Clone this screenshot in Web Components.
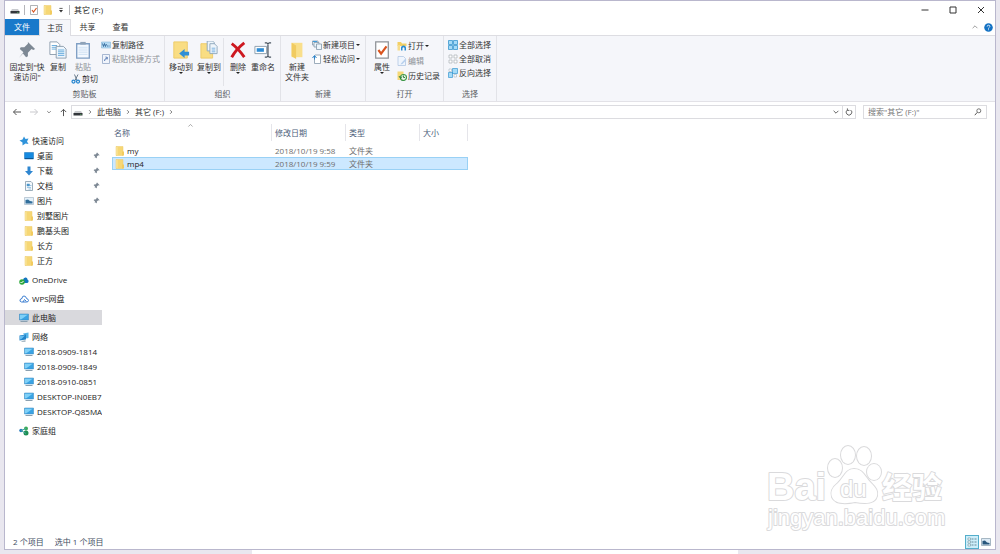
<!DOCTYPE html>
<html lang="zh-CN">
<head>
<meta charset="utf-8">
<title>其它 (F:)</title>
<style>
  html, body { margin: 0; height: 100%; }
  body {
    background: #e9e7ef;
    font: 8px/10px "Open Sans", "Noto Sans CJK SC", sans-serif;
    color: #222;
  }
</style>
</head>
<body>
<explorer-window></explorer-window>

<script>
const folder = '<path d="M2 1h14v18H2z" fill="#f6d775"/><path d="M2 1h3v18H2z" fill="#fae7a0"/><path d="M14 11h4v8h-4z" fill="#f3cc5c"/><path d="M2 1h14v18H2z" fill="none" stroke="#ecca68"/>';
const monitor = '<path d="M1 2h18v12H1z" fill="#3aa3e3"/><path d="M2 3h16L4 13H2z" fill="#7fd0f7"/><path d="M1 2h18v12H1z" fill="none" stroke="#3487bd"/><path d="M3 17h14" stroke="#8ba0b0" stroke-width="2"/>';
const ICONS = {
  drive: '<path d="M4 8h12l3 5H1z" fill="#c9cbce"/><path d="M1 12h18v5H1z" fill="#33363b"/><path d="M14 14h3v1h-3z" fill="#5fd36b"/>',
  checkdoc: '<path d="M3 1h14v18H3z" fill="#fff" stroke="#8f9398" stroke-width="1.4"/><path d="M6 10l3 4 6-8" fill="none" stroke="#d9541e" stroke-width="2.4"/>',
  folder,
  quickmenu: '<path d="M6 6h8" stroke="#333" stroke-width="2"/><path d="M5 10h10l-5 6z" fill="#333"/>',
  minimize: '<path d="M3 10h14" stroke="#333" stroke-width="2"/>',
  maximize: '<path d="M4 4h12v12H4z" fill="none" stroke="#333" stroke-width="2"/>',
  close: '<path d="M4 4l12 12M16 4L4 16" stroke="#333" stroke-width="2"/>',
  up2: '<path d="M4 13l6-6 6 6" fill="none" stroke="#888" stroke-width="2"/>',
  help: '<circle cx="10" cy="10" r="9.500" fill="#1472c4"/><path d="M7 8q0-3 3-3t3 2.500q0 1.500-1.500 2.500T10 12.500M10 14v2" fill="none" stroke="#fff" stroke-width="1.800"/>',
  pin: '<path d="M11 1l8 8-2 1-2-1-4 4v4l-2 1-3.500-4L1 19l5-6.500L2 9l1-2h4l4-4z" fill="#7d8894"/>',
  copy: '<g stroke="#8a9baa" fill="#fff"><path d="M1 1h8l3 3v11H1z"/><path d="M3 5h6M3 7h6M3 9h5" stroke="#5fa7da"/><path d="M8 6h8l3 3v10H8z" fill="#eef6fd"/><path d="M10 10h7M10 12h7M10 14h7M10 16h7" stroke="#5fa7da"/></g>',
  paste: '<path d="M3 3h14v16H3z" fill="#f4f9ff" stroke="#7f9fc4" stroke-width="1.500"/><path d="M7 1h6v3H7z" fill="#8fa3b8"/><path d="M5 7h10M5 9h10M5 11h10M5 13h10M5 15h10" stroke="#cfe1f4"/>',
  scissors: '<path d="M7 1l5 12M14 1L8 13" stroke="#6b7c8c" stroke-width="2"/><circle cx="5" cy="15" r="3" fill="none" stroke="#2585cf" stroke-width="2.500"/><circle cx="14" cy="15" r="3" fill="none" stroke="#2585cf" stroke-width="2.500"/>',
  path: '<path d="M1 4h18v12H1z" fill="#b7dbf3" stroke="#75abd1"/><path d="M3 7l2 6 2-6 2 6 2-5M12 12h2M15 12h2" fill="none" stroke="#19538b" stroke-width="1.500"/>',
  shortcut: '<path d="M3 1h14v18H3z" fill="#f1f5fc" stroke="#8fa3c4" stroke-width="1.500"/><path d="M7 14q0-5 5-6M9 6l4 1-1 4" fill="none" stroke="#5b7db5" stroke-width="2"/>',
  moveto: '<path d="M2 1h15v18H2z" fill="#f9dd83" stroke="#ecc968"/><path d="M8 14l6-5v3h5v4h-5v3z" fill="#2f8fd6"/>',
  copyto: '<path d="M1 3h13v16H1z" fill="#f9dd83" stroke="#ecc968"/><g fill="#eef5fb" stroke="#8ba5ba"><path d="M8 0h6l2 2v9H8z"/><path d="M11 3h5l3 3v8h-8z"/><path d="M13 8h4M13 10h4M13 12h4" stroke="#73aee0"/></g>',
  delete: '<path d="M3 3q7 5 14 15M17 2Q8 9 3 18" fill="none" stroke="#cd1820" stroke-width="3.200"/>',
  rename: '<path d="M1 6h13v8H1z" fill="#fff" stroke="#879aaa"/><path d="M3 8h8v4H3z" fill="#2d8cd6"/><path d="M12 2h2l1.500 1L17 2h2M15.500 3v14M12 18h2l1.500-1 1.500 1h2" fill="none" stroke="#4a5560" stroke-width="1.400"/>',
  newfolder: '<path d="M4 2h12v16H4z" fill="#f9df8b"/><path d="M4 2l5 3v15l-5-3z" fill="#f1cb60"/>',
  newitem: '<g fill="#edf5fb" stroke="#7d93a5" stroke-width="1.500"><path d="M1 2h11v8H1z"/><path d="M4 5h10v9H4z"/><path d="M9 8h10v11H9z"/></g><path d="M2 3h8" stroke="#3f9cdb" stroke-width="2"/>',
  easy: '<path d="M6 2h11v17H5v-9" fill="#fff" stroke="#7d93a5" stroke-width="1.500"/><path d="M1 8l4-5 4 5M5 4v7" fill="none" stroke="#2d83c7" stroke-width="2"/>',
  open: '<path d="M1 2h7l2 3h9v5H1z" fill="#f3cf65"/><path d="M1 8h5v11H1z" fill="#f6dc8b"/><path d="M8 19v-5q0-5 5-5t5 5v5h-3v-5q-2-3-4 0v5z" fill="#2a8bcf"/>',
  edit: '<path d="M2 1h11l4 4v14H2z" fill="#eff5fd" stroke="#adc4e2" stroke-width="1.500"/><path d="M8 15l8-9 3 2-8 8-4 1z" fill="#b8d1ee"/>',
  history: '<path d="M1 1h12v17H1z" fill="#f5d977"/><circle cx="13" cy="13" r="6" fill="#e9f4e6" stroke="#3d9747" stroke-width="2.200"/><path d="M13 9v4h3M4 10l3 5 3-4" fill="none" stroke="#277b37" stroke-width="1.800"/>',
  selall: '<path d="M1 1h8v8H1zM11 1h8v8h-8zM1 11h8v8H1zM11 11h8v8h-8z" fill="#a5dbf7" stroke="#2f92cc" stroke-width="1.500"/>',
  selnone: '<path d="M2 2h6v6H2zM12 2h6v6h-6zM2 12h6v6H2zM12 12h6v6h-6z" fill="#fff" stroke="#a5abb1" stroke-width="1.300"/>',
  selinv: '<path d="M9 1h10v10H9zM1 9h8v10H1z" fill="#a5dbf7" stroke="#2f92cc" stroke-width="1.300"/><path d="M2 2h5v5H2zM12 13h5v5h-5z" fill="#fff" stroke="#91a7b7"/>',
  back: '<path d="M18 10H3M9 4l-6 6 6 6" fill="none" stroke="#555" stroke-width="2"/>',
  forward: '<path d="M2 10h15M11 4l6 6-6 6" fill="none" stroke="#c9c9cd" stroke-width="2"/>',
  up: '<path d="M10 18V3M4 9l6-6 6 6" fill="none" stroke="#555" stroke-width="2.200"/>',
  down: '<path d="M4 7l6 6 6-6" fill="none" stroke="#666" stroke-width="2.500"/>',
  right: '<path d="M7 4l6 6-6 6" fill="none" stroke="#555" stroke-width="2.500"/>',
  refresh: '<path d="M14 5a7 7 0 1 1-8 0M6 1v5h5" fill="none" stroke="#555" stroke-width="2.200"/>',
  search: '<circle cx="12" cy="7" r="5" fill="none" stroke="#555" stroke-width="2"/><path d="M8 11l-6 7" stroke="#555" stroke-width="2.500"/>',
  star: '<path d="M10 1l3 5 6-1-3 6 3 5-6-1-6 4v-6L1 9l6-2z" fill="#2f93da"/>',
  desktop: '<path d="M1 3h18v13H1z" fill="#168ae0" stroke="#0f6cb6"/><path d="M2 15h16" stroke="#0c5593" stroke-width="2"/>',
  download: '<path d="M7 1h6v9h5l-8 9-8-9h5z" fill="#2e86d0"/>',
  document: '<path d="M3 1h11l3 3v15H3z" fill="#f4f8fb" stroke="#7e95a5" stroke-width="1.500"/><path d="M6 6h5v4H6zM6 13h8M9 16h5M12 9h3" fill="#4b97cb" stroke="#4b97cb"/>',
  picture: '<path d="M1 3h18v14H1z" fill="#e4f1fa" stroke="#8da1b0"/><path d="M3 13V8l5-1 4 3 5 1v4H3z" fill="#326f9b"/>',
  onedrive: '<path d="M3 14q0-5 5-4 1-6 6-5 3 1 3 4 3 1 2 5l-2 2H5z" fill="#1376bf"/><circle cx="6" cy="14" r="5.500" fill="#2fa83c"/><path d="M3 14l2 2 4-4" fill="none" stroke="#fff" stroke-width="2"/>',
  wps: '<path d="M5 16q-4-1-3-4 1-3 4-3 0-5 4-5t5 5q4 1 4 4t-4 3zM8 16l3-5 4 4" fill="none" stroke="#3d7fd1" stroke-width="2"/>',
  monitor,
  network: '<path d="M8 3l11-2v11l-4 1z" fill="#57b5e8"/><path d="M1 7l13-2v10L1 17z" fill="#2183c9"/><path d="M2 8l10-1-7 7-3 1z" fill="#65bdf0"/><path d="M5 18l8-1v2H5z" fill="#5b7b90"/>',
  homegroup: '<circle cx="4" cy="9" r="3.500" fill="#2579bd"/><circle cx="14" cy="5" r="4" fill="#3aaa5a"/><circle cx="14" cy="14" r="5" fill="#1d8f53"/><path d="M4 9l10-4M4 9l10 6" stroke="#48a6a0" stroke-width="2"/>',
  details: '<path d="M2 2h5v4H2zM2 8h5v4H2zM2 14h5v4H2z" fill="#fff" stroke="#58808f"/><path d="M9 4h4M15 4h4M9 10h4M15 10h4M9 16h4M15 16h4" stroke="#476b7b" stroke-width="1.500"/>',
  thumbs: '<path d="M1 3h18v14H1z" fill="#dceaf5" stroke="#8da1b0" stroke-width="1.500"/><path d="M3 8l5-1 4 4 5 1v3H3z" fill="#27567c"/>'
};

const define = (name, html) => customElements.define(name, class extends HTMLElement {
  constructor() {
    super();
    this.attachShadow({ mode: 'open' });
  }
  connectedCallback() {
    if (this.shadowRoot.childNodes.length) return;
    const t = document.createElement('template');
    t.innerHTML = typeof html === 'function' ? html(this) : html;
    this.shadowRoot.append(t.content.cloneNode(true));
  }
});

const BUTTON = 'button{font:inherit;color:inherit;background:none;border:0;padding:0;margin:0;display:flex;align-items:center;justify-content:center;white-space:nowrap}';

define('ui-icon', el => `
  <style>
    :host { display: block; flex: none; width: ${el.getAttribute('size') || 10}px; height: ${el.getAttribute('size') || 10}px; }
    svg { display: block; width: 100%; height: 100%; }
  </style>
  <svg viewBox="0 0 20 20" aria-hidden="true">${ICONS[el.getAttribute('name')]}</svg>`);

define('title-bar', `
  <style>
    ${BUTTON}
    :host { display: flex; align-items: center; height: 18px; padding-left: 5px; background: #fff; }
    .quick { display: flex; align-items: center; gap: 4px; margin-right: 4px; }
    .rule { width: 1px; height: 10px; background: #b5b5b9; }
    h1 { margin: 0; font: inherit; flex: 1; }
    .controls { display: flex; }
    .controls button { width: 28px; height: 18px; }
  </style>
  <div class="quick">
    <ui-icon name="drive"></ui-icon>
    <span class="rule"></span>
    <button aria-label="属性"><ui-icon name="checkdoc"></ui-icon></button>
    <button aria-label="新建文件夹"><ui-icon name="folder"></ui-icon></button>
    <button aria-label="自定义"><ui-icon name="quickmenu" size="8"></ui-icon></button>
    <span class="rule"></span>
  </div>
  <h1>其它 (F:)</h1>
  <div class="controls">
    <button aria-label="最小化"><ui-icon name="minimize"></ui-icon></button>
    <button aria-label="最大化"><ui-icon name="maximize"></ui-icon></button>
    <button aria-label="关闭"><ui-icon name="close"></ui-icon></button>
  </div>`);

define('ribbon-tabs', `
  <style>
    ${BUTTON}
    :host { display: flex; align-items: stretch; height: 17px; background: #fff; border-bottom: 1px solid #dddde2; box-sizing: border-box; }
    button { width: 33px; color: #333; }
    .file { width: 34px; background: #1979ca; color: #fff; }
    .on { background: #f5f6fa; border: 1px solid #dddde2; border-bottom: 0; margin-bottom: -1px; width: 32px; }
    .right { margin-left: auto; display: flex; align-items: center; gap: 5px; padding-right: 2px; }
    .right button { width: auto; }
  </style>
  <button class="file">文件</button>
  <button class="on">主页</button>
  <button>共享</button>
  <button>查看</button>
  <div class="right">
    <button aria-label="折叠功能区"><ui-icon name="up2" size="8"></ui-icon></button>
    <button aria-label="帮助"><ui-icon name="help" size="9"></ui-icon></button>
  </div>`);

define('ribbon-group', `
  <style>
    :host { display: flex; flex-direction: column; justify-content: space-between; box-sizing: border-box; flex: none; border-right: 1px solid #e2e3e8; }
    .body { display: flex; padding: 2px 0 0 1px; }
    .label { text-align: center; color: #5a5d63; line-height: 12px; padding-bottom: 1px; }
  </style>
  <div class="body"><slot></slot></div>
  <div class="label"><slot name="label"></slot></div>`);

define('large-button', el => `
  <style>
    ${BUTTON}
    :host { display: block; flex: none; }
    button { flex-direction: column; width: 100%; }
    .icon { height: 24px; display: flex; align-items: center; }
    .caret { border: 2px solid transparent; border-top-color: #222; border-bottom: 0; }
  </style>
  <button><span class="icon"><ui-icon name="${el.getAttribute('icon')}" size="18"></ui-icon></span><span><slot></slot></span>${el.hasAttribute('menu') ? '<span class="caret"></span>' : ''}</button>`);

define('small-button', el => `
  <style>
    ${BUTTON}
    :host { display: block; flex: none; }
    button { gap: 1px; height: 14px; }
    .caret { border: 2px solid transparent; border-top-color: #222; border-bottom: 0; }
  </style>
  <button><ui-icon name="${el.getAttribute('icon')}"></ui-icon><span><slot></slot></span>${el.hasAttribute('menu') ? '<span class="caret"></span>' : ''}</button>`);

define('ribbon-bar', `
  <style>
    :host { display: flex; height: 65px; background: #f5f6fa; border-bottom: 1px solid #e3e2e7; color: #333; }
    .stack { display: flex; flex-direction: column; }
    .loose { gap: 1px; padding-top: 1px; }
    .muted { color: #8d9096; }
    .clip { width: 160px; } .organize { width: 116px; } .new { width: 85px; } .open { width: 78px; } .select { width: 53px; }
    .w42 { width: 42px; } .w30 { width: 30px; } .w20 { width: 20px; } .w26 { width: 26px; }
    .rule { width: 1px; height: 48px; background: #e2e3e8; margin: 0 4px 0 1px; }
    .gap { padding-left: 3px; }
  </style>
  <ribbon-group class="clip">
    <large-button class="w42" icon="pin">固定到"快<br>速访问"</large-button>
    <large-button class="w20" icon="copy">复制</large-button>
    <div class="stack">
      <large-button class="w30 muted" icon="paste">粘贴</large-button>
      <small-button class="gap" icon="scissors">剪切</small-button>
    </div>
    <div class="stack gap">
      <small-button icon="path">复制路径</small-button>
      <small-button class="muted" icon="shortcut">粘贴快捷方式</small-button>
    </div>
    <span slot="label">剪贴板</span>
  </ribbon-group>
  <ribbon-group class="organize">
    <large-button class="w30" icon="moveto" menu>移动到</large-button>
    <large-button class="w26" icon="copyto" menu>复制到</large-button>
    <span class="rule"></span>
    <large-button class="w20" icon="delete" menu>删除</large-button>
    <large-button class="w30" icon="rename">重命名</large-button>
    <span slot="label">组织</span>
  </ribbon-group>
  <ribbon-group class="new">
    <large-button class="w30" icon="newfolder">新建<br>文件夹</large-button>
    <div class="stack">
      <small-button icon="newitem" menu>新建项目</small-button>
      <small-button icon="easy" menu>轻松访问</small-button>
    </div>
    <span slot="label">新建</span>
  </ribbon-group>
  <ribbon-group class="open">
    <large-button class="w30" icon="checkdoc" menu>属性</large-button>
    <div class="stack loose">
      <small-button icon="open" menu>打开</small-button>
      <small-button class="muted" icon="edit">编辑</small-button>
      <small-button icon="history">历史记录</small-button>
    </div>
    <span slot="label">打开</span>
  </ribbon-group>
  <ribbon-group class="select">
    <div class="stack gap">
      <small-button icon="selall">全部选择</small-button>
      <small-button icon="selnone">全部取消</small-button>
      <small-button icon="selinv">反向选择</small-button>
    </div>
    <span slot="label">选择</span>
  </ribbon-group>`);

define('address-bar', `
  <style>
    ${BUTTON}
    :host { display: flex; align-items: center; gap: 3px; padding: 3px 8px 2px 7px; background: #fff; color: #333; }
    .nav { display: flex; align-items: center; gap: 7px; }
    .box { flex: 1; display: flex; align-items: center; gap: 4px; height: 14px; box-sizing: border-box; border: 1px solid #dcdce0; padding-left: 1px; margin-right: 4px; }
    .end { margin-left: auto; display: flex; align-self: stretch; }
    .end button { width: 13px; }
    .end button + button { border-left: 1px solid #dcdce0; }
    form { display: flex; align-items: center; width: 124px; height: 14px; box-sizing: border-box; border: 1px solid #dcdce0; padding: 0 4px; }
    input { flex: 1; min-width: 0; border: 0; padding: 0; background: none; font: inherit; outline: 0; }
    input::placeholder { color: #777; opacity: 1; }
  </style>
  <div class="nav">
    <button aria-label="后退"><ui-icon name="back"></ui-icon></button>
    <button aria-label="前进"><ui-icon name="forward"></ui-icon></button>
    <button aria-label="最近浏览的位置"><ui-icon name="down" size="6"></ui-icon></button>
    <button aria-label="上移"><ui-icon name="up" size="9"></ui-icon></button>
  </div>
  <div class="box">
    <ui-icon name="drive"></ui-icon>
    <ui-icon name="right" size="6"></ui-icon>
    <button>此电脑</button>
    <ui-icon name="right" size="6"></ui-icon>
    <button>其它 (F:)</button>
    <ui-icon name="right" size="6"></ui-icon>
    <div class="end">
      <button aria-label="历史位置"><ui-icon name="down" size="8"></ui-icon></button>
      <button aria-label="刷新"><ui-icon name="refresh" size="8"></ui-icon></button>
    </div>
  </div>
  <form>
    <input type="text" aria-label="搜索" placeholder='搜索"其它 (F:)"'>
    <ui-icon name="search" size="8"></ui-icon>
  </form>`);

define('nav-item', el => `
  <style>
    :host { display: block; }
    a { display: flex; align-items: center; gap: 3px; height: 15px; padding-left: 14px; color: inherit; text-decoration: none; white-space: nowrap; overflow: hidden; }
    :host([sub]) a { padding-left: 19px; }
    :host([current]) a { background: #d9d9dd; }
    .pin { margin: 0 2px 0 auto; }
  </style>
  <a href="#"><ui-icon name="${el.getAttribute('icon')}"></ui-icon><span><slot></slot></span>${el.hasAttribute('pinned') ? '<ui-icon class="pin" name="pin" size="7"></ui-icon>' : ''}</a>`);

define('nav-pane', `
  <style>
    :host { display: flex; flex-direction: column; gap: 4px; width: 97px; flex: none; padding-top: 12px; overflow: hidden; }
  </style>
  <div>
    <nav-item icon="star">快速访问</nav-item>
    <nav-item sub pinned icon="desktop">桌面</nav-item>
    <nav-item sub pinned icon="download">下载</nav-item>
    <nav-item sub pinned icon="document">文档</nav-item>
    <nav-item sub pinned icon="picture">图片</nav-item>
    <nav-item sub icon="folder">别墅图片</nav-item>
    <nav-item sub icon="folder">鹏基头图</nav-item>
    <nav-item sub icon="folder">长方</nav-item>
    <nav-item sub icon="folder">正方</nav-item>
  </div>
  <nav-item icon="onedrive">OneDrive</nav-item>
  <nav-item icon="wps">WPS网盘</nav-item>
  <nav-item current icon="monitor">此电脑</nav-item>
  <div>
    <nav-item icon="network">网络</nav-item>
    <nav-item sub icon="monitor">2018-0909-1814</nav-item>
    <nav-item sub icon="monitor">2018-0909-1849</nav-item>
    <nav-item sub icon="monitor">2018-0910-0851</nav-item>
    <nav-item sub icon="monitor">DESKTOP-IN0EB7</nav-item>
    <nav-item sub icon="monitor">DESKTOP-Q85MA</nav-item>
  </div>
  <nav-item icon="homegroup">家庭组</nav-item>`);

define('file-list', `
  <style>
    :host { display: block; flex: 1; padding: 3px 0 0 10px; }
    table { border-collapse: separate; border-spacing: 0; table-layout: fixed; width: 356px; }
    th, td { padding: 0 0 0 3px; text-align: left; font-weight: normal; box-sizing: border-box; }
    th { height: 17px; color: #4c607a; border-right: 1px solid #e5e5ea; position: relative; }
    th:first-child { padding-left: 2px; }
    td:first-child { padding-left: 3px; }
    th ui-icon { position: absolute; left: 75px; top: -2px; }
    td { height: 13px; color: #6d6d6d; }
    td .name { display: flex; align-items: center; gap: 2px; color: #222; }
    tbody::before { content: ""; display: block; height: 3px; }
    tr.on td { background: #cce8ff; border: solid #99d1f5; border-width: 1px 0; }
    tr.on td:first-child { border-left-width: 1px; padding-left: 2px; }
    tr.on td:last-child { border-right-width: 1px; }
    .c1 { width: 160px; } .c2, .c3 { width: 74px; } .c4 { width: 48px; }
  </style>
  <table>
    <colgroup><col class="c1"><col class="c2"><col class="c3"><col class="c4"></colgroup>
    <thead><tr><th>名称<ui-icon name="up2" size="7"></ui-icon></th><th>修改日期</th><th>类型</th><th>大小</th></tr></thead>
    <tbody>
      <tr><td><span class="name"><ui-icon name="folder"></ui-icon>my</span></td><td>2018/10/19 9:58</td><td>文件夹</td><td></td></tr>
      <tr class="on"><td><span class="name"><ui-icon name="folder"></ui-icon>mp4</span></td><td>2018/10/19 9:59</td><td>文件夹</td><td></td></tr>
    </tbody>
  </table>`);

define('status-bar', `
  <style>
    ${BUTTON}
    :host { display: flex; align-items: center; gap: 11px; height: 15px; padding: 0 4px 0 8px; color: #3e4d61; }
    .views { margin-left: auto; display: flex; align-items: center; gap: 2px; }
    .views .on { background: #cdeefa; border: 1px solid #54aecb; width: 14px; height: 14px; }
  </style>
  <span>2 个项目</span><span>选中 1 个项目</span>
  <div class="views">
    <button class="on" aria-label="详细信息"><ui-icon name="details"></ui-icon></button>
    <button aria-label="大图标"><ui-icon name="thumbs"></ui-icon></button>
  </div>`);

define('baidu-mark', `
  <style>
    :host { position: absolute; right: 46px; bottom: 16px; width: 186px; height: 90px; pointer-events: none; }
    svg { display: block; }
    text, .paw { fill: #fff; stroke: #dadadc; stroke-width: 2px; paint-order: stroke; stroke-linejoin: round; }
    .latin { font-family: "Liberation Sans", sans-serif; }
    .han { font-family: "Noto Sans CJK SC", sans-serif; }
  </style>
  <svg width="186" height="90" viewBox="0 0 186 90">
    <text class="latin" x="4" y="57" font-size="38" font-weight="bold">Bai</text>
    <g class="paw">
      <ellipse cx="72" cy="25" rx="7" ry="9"/>
      <ellipse cx="85" cy="12" rx="7" ry="9"/>
      <ellipse cx="101" cy="13" rx="7" ry="9"/>
      <ellipse cx="111" cy="29" rx="7" ry="8"/>
      <path d="M91 26c9 0 11 8 17 14 5 5 7 8 6 13-2 8-12 8-22 6-10 2-20 2-23-5-2-6 1-10 6-14 6-6 8-14 16-14z"/>
    </g>
    <text class="latin" x="77" y="54" font-size="24">du</text>
    <text class="han" x="119" y="55" font-size="30" font-weight="bold">经验</text>
    <text class="latin" x="5" y="82" font-size="22">jingyan.baidu.com</text>
  </svg>`);

define('explorer-window', `
  <style>
    :host { display: flex; flex-direction: column; min-height: 100vh; box-sizing: border-box; padding: 0 4px; }
    .window { flex: 1; display: flex; flex-direction: column; position: relative; background: #fff; border: 1px solid #b9b7cd; }
    main { flex: 1; display: flex; }
    .below { height: 4px; width: 49%; margin-left: 25%; background: #fff; }
  </style>
  <div class="window">
    <title-bar></title-bar>
    <ribbon-tabs></ribbon-tabs>
    <ribbon-bar></ribbon-bar>
    <address-bar></address-bar>
    <main><nav-pane></nav-pane><file-list></file-list></main>
    <status-bar></status-bar>
    <baidu-mark></baidu-mark>
  </div>
  <div class="below"></div>`);
</script>
</body>
</html>
